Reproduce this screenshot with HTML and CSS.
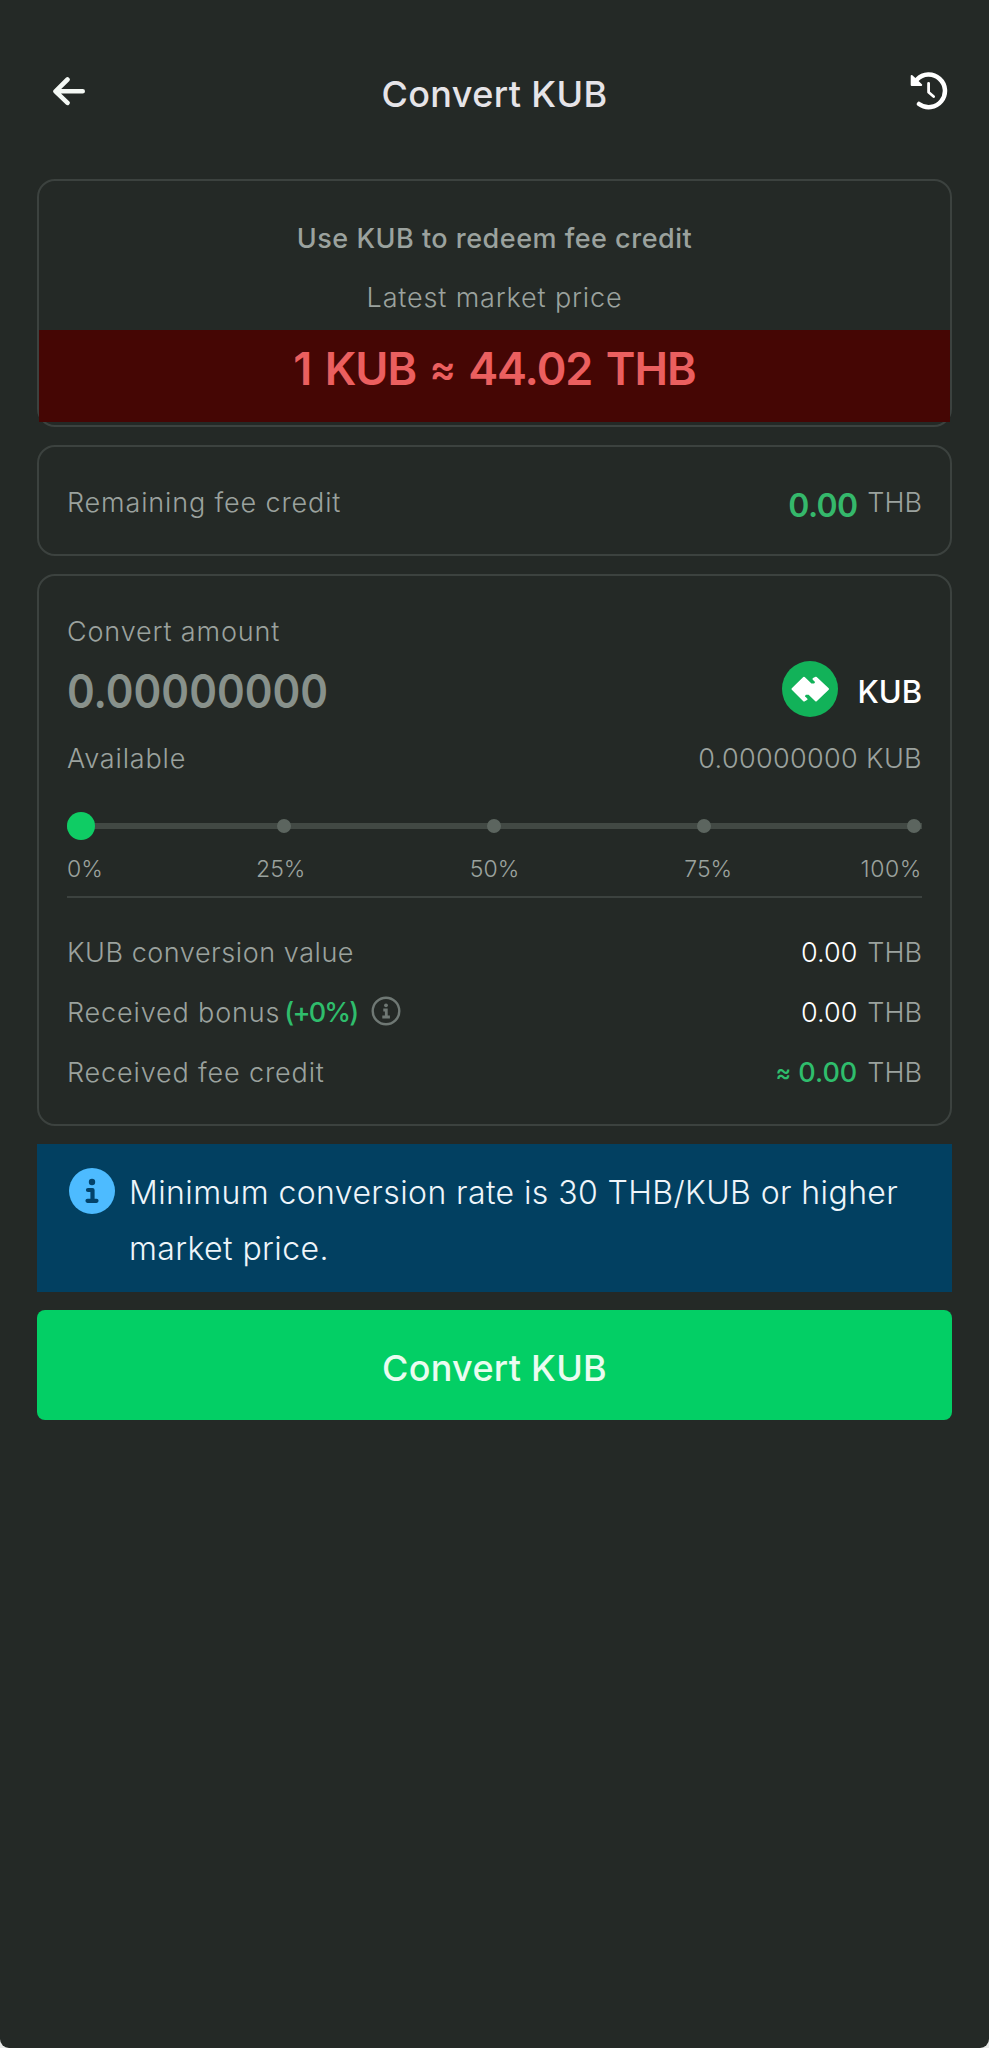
FILE: index.html
```html
<!DOCTYPE html>
<html lang="en">
<head>
<meta charset="utf-8">
<title>Convert KUB</title>
<link rel="stylesheet" href="styles.css">
</head>
<body>
<header class="topbar">
  <svg class="back" viewBox="0 0 34 30" fill="none" stroke="#f4f8f4" stroke-width="4.6" stroke-linecap="round" stroke-linejoin="round"><path d="M15.500 3.500 3.500 15.300l12 11.500M4 15.300h26.700"/></svg>
  <h1 class="title">Convert KUB</h1>
  <svg class="history" viewBox="0 0 38 38" fill="none" stroke="#fff" stroke-linecap="round" stroke-linejoin="round"><path stroke-width="4.500" d="M7 7.500A16.300 16.300 0 1 1 9 32"/><path fill="#fff" stroke-width="2" d="M1.700 4v9h9.500L6 8z"/><path stroke-width="2.800" d="M18.600 11.300v9l5 4.200"/></svg>
</header>
<main class="content">
  <section class="card price-card">
    <p class="lead">Use KUB to redeem fee credit</p>
    <p class="sub">Latest market price</p>
    <p class="price">1 KUB <span class="approx">≈</span> 44.02 THB</p>
  </section>
  <section class="card credit-card row">
    <span>Remaining fee credit</span>
    <span class="amount"><b class="credit">0.00</b><span class="unit">THB</span></span>
  </section>
  <section class="card convert-card">
    <p>Convert amount</p>
    <div class="entry">
      <span class="entry-value">0.00000000</span>
      <span class="coin">
        <svg class="coin-logo" viewBox="0 0 56 56"><circle cx="28" cy="28" r="28" fill="#12b259"/><path fill="#fff" stroke="#fff" stroke-width="2" stroke-linejoin="round" d="M10.500 28 22 16.700 29 23.500h3.500L34 21.500v-1L31.500 18 34 16.700 46 28 34 39.500 27 32.700h-3.500L22 34.700v1L24.500 38.200 22 39.500z"/></svg>
        <span class="coin-name">KUB</span>
      </span>
    </div>
    <div class="row"><span>Available</span><span class="balance">0.00000000 KUB</span></div>
    <div class="slider"><i class="thumb"></i><i class="dot"></i><i class="dot"></i><i class="dot"></i><i class="dot"></i></div>
    <div class="ticks"><span>0%</span><span>25%</span><span>50%</span><span>75%</span><span>100%</span></div>
    <div class="row result"><span class="snug">KUB conversion value</span><span class="amount"><span class="white">0.00</span><span class="unit">THB</span></span></div>
    <div class="row result"><span class="bonus"><span>Received bonus</span><b class="green rate">(+0%)</b><svg class="hint" viewBox="0 0 30 30"><circle cx="15" cy="15" r="13.300" fill="none" stroke="#6f7874" stroke-width="2.400"/><circle cx="15" cy="9.300" r="1.900" fill="#6f7874"/><path d="M12.300 14h3v6.800M11.300 21h7.600" fill="none" stroke="#6f7874" stroke-width="2.800"/></svg></span><span class="amount"><span class="white">0.00</span><span class="unit">THB</span></span></div>
    <div class="row result"><span>Received fee credit</span><span class="amount"><b class="green"><span class="approx">≈</span> 0.00</b><span class="unit">THB</span></span></div>
  </section>
  <section class="notice">
    <svg class="notice-icon" viewBox="0 0 46 46"><circle cx="23" cy="23" r="23" fill="#4dbbff"/><circle cx="23" cy="14" r="3.200" fill="#03436a"/><path d="M19 22h4.500v10.500M18.500 32.800h9" fill="none" stroke="#03436a" stroke-width="4.200" stroke-linecap="round" stroke-linejoin="round"/></svg>
    <p>Minimum conversion rate is 30 THB/KUB or higher<br>market price.</p>
  </section>
  <button class="submit">Convert KUB</button>
</main>
</body>
</html>
```
FILE: styles.css
```css
* { box-sizing: border-box; }
html { background: #e8e9e8; }
body { margin: 0; height: 2048px; border-radius: 0 0 9px 9px; background: #242926; color: #9ba29e; font-family: Inter, "Liberation Sans", sans-serif; font-size: 27px; font-weight: 350; line-height: 40px; letter-spacing: 0.85px; }
h1, p { margin: 0; }
b { font-weight: 550; }
svg { display: block; flex: none; }
.topbar { display: grid; grid-template-columns: 60px 1fr 71px; align-items: start; height: 179px; padding: 72px 41px 0 52px; }
.back { width: 34px; height: 30px; margin-top: 4px; }
.title { color: #e6e4e8; font-size: 36px; font-weight: 540; line-height: 44px; letter-spacing: 0.4px; text-align: center; }
.history { width: 38px; height: 38px; justify-self: end; }
.content { display: flex; flex-direction: column; padding: 0 37px; }
.card { border: 2px solid #3c423f; border-radius: 18px; }
.price-card { height: 248px; padding-top: 38px; text-align: center; }
.lead { font-weight: 540; letter-spacing: 0.5px; }
.sub { margin-top: 19px; }
.price { height: 92px; margin-top: 12px; background: #450604; color: #eb5f5f; font-size: 45px; font-weight: 600; line-height: 78px; letter-spacing: -1px; word-spacing: 3px; }
.approx { font-size: 0.87em; line-height: 1; vertical-align: 0.06em; }
.row { display: flex; justify-content: space-between; }
.amount { display: flex; gap: 10px; letter-spacing: 0; }
.unit { letter-spacing: 0; }
.credit-card { height: 111px; margin-top: 18px; padding: 36px 28px 0; }
.credit { color: #35b86b; font-size: 32px; font-weight: 600; line-height: 46px; letter-spacing: -0.7px; }
.convert-card { height: 552px; margin-top: 18px; padding: 36px 28px 0; }
.entry { display: flex; align-items: flex-start; justify-content: space-between; height: 78px; margin-top: 9px; }
.entry-value { color: #88918b; font-size: 46px; font-weight: 600; line-height: 60px; letter-spacing: 0; transform: scaleX(0.915); transform-origin: left; }
.coin { display: flex; gap: 19px; letter-spacing: 0; }
.coin-logo { width: 56px; height: 56px; }
.coin-name { color: #fff; font-size: 31px; font-weight: 540; line-height: 62px; }
.balance { letter-spacing: 0.35px; }
.slider { display: flex; align-items: center; justify-content: space-between; height: 28px; margin-top: 33px; padding-right: 1px; background: linear-gradient(#424944, #424944) center / 100% 6px no-repeat; }
.thumb { width: 28px; height: 28px; margin-right: -14px; border-radius: 50%; background: #0fcc64; }
.dot { width: 14px; height: 14px; border-radius: 50%; background: #5c655f; }
.ticks { display: grid; grid-template-columns: 1fr 2fr 2fr 2fr 1fr; height: 49px; margin: 9px 0 35px; border-bottom: 2px solid #3c423f; font-size: 23px; letter-spacing: 0; text-align: center; }
.ticks span:first-child { text-align: left; }
.ticks span:last-child { text-align: right; letter-spacing: 0.6px; }
.result { height: 60px; }
.snug { letter-spacing: 0.55px; }
.white { color: #fff; }
.green { color: #2fbd6c; }
.bonus { display: flex; }
.rate { margin-left: 4px; letter-spacing: -1.8px; }
.hint { width: 30px; height: 30px; margin: 3px 0 0 13px; }
.notice { display: flex; height: 148px; margin-top: 18px; padding: 21px 0 0 32px; background: #024061; color: #eef5fa; font-size: 32px; line-height: 56px; letter-spacing: 0.4px; white-space: nowrap; }
.notice-icon { width: 46px; height: 46px; margin: 3px 14px 0 0; }
.submit { height: 110px; margin-top: 18px; padding: 5px 0 0; border: 0; border-radius: 8px; background: #03cf65; color: #eafcf0; font: 540 36px/44px Inter, "Liberation Sans", sans-serif; letter-spacing: 0.3px; }
```
